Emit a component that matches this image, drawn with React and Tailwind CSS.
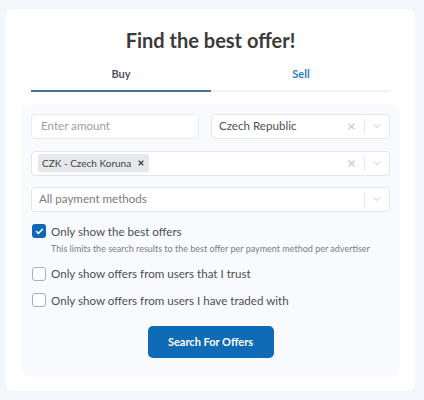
import React, { useState } from 'react';
import { X, ChevronDown, Check } from 'lucide-react';

const font = { fontFamily: 'Lato, "Open Sans", sans-serif' };

const SelectBox = ({ children, clearable = true }) => (
  <div className="h-[25px] flex items-center bg-white border border-[#e3e6ea] rounded-[4px] pl-[7px]">
    <div className="flex-1 flex items-center min-w-0">{children}</div>
    {clearable && <X className="w-[11px] h-[11px] text-[#c4c7cb] mr-[7px]" strokeWidth={2.5} />}
    <div className="w-px h-[15px] bg-[#e3e6ea]" />
    <ChevronDown className="w-[12px] h-[12px] text-[#b8bcc1] mx-[6px]" strokeWidth={1.8} />
  </div>
);

const CheckRow = ({ checked, label, children }) => (
  <div>
    <div className="flex items-center gap-[5px]">
      <div
        className={`w-[14px] h-[14px] rounded-[3px] flex items-center justify-center ${
          checked ? 'bg-[#0f68b3]' : 'bg-white border border-[#a9b0b8]'
        }`}
      >
        {checked && <Check className="w-[9px] h-[9px] text-white" strokeWidth={4} />}
      </div>
      <span className="text-[11.6px] text-[#4b4f55]">{label}</span>
    </div>
    {children}
  </div>
);

export default function App() {
  const [tab] = useState('buy');
  return (
    <div className="w-[424px] h-[400px] bg-[#f3f6fa] pt-[9px] pl-[6px]" style={font}>
      <div className="w-[409px] h-[382px] bg-white rounded-[7px] flex flex-col items-center">
        <h1 className="text-[20px] font-bold text-[#3b3b3b] mt-[21px] leading-none">Find the best offer!</h1>
        <div className="w-[360px] flex mt-[16px] ml-[1px]">
          <div className={`flex-1 text-center text-[11px] font-bold pb-[7px] border-b-2 ${tab === 'buy' ? 'border-[#4a7099] text-[#4b5563]' : ''}`}>
            Buy
          </div>
          <div className="flex-1 text-center text-[11px] font-bold pb-[7px] border-b-2 border-[#f1f3f5] text-[#2a80c4]">
            Sell
          </div>
        </div>
        <div className="w-[379px] h-[273px] mt-[12px] bg-[#f8fafd] rounded-[10px] px-[10px] pt-[10px]">
          <div className="flex gap-[12px]">
            <div className="w-[168px] h-[25px] bg-white border border-[#e9ecef] rounded-[4px] flex items-center pl-[9px] text-[11.6px] text-[#9aa0a6]">
              Enter amount
            </div>
            <div className="flex-1">
              <SelectBox>
                <span className="text-[11.6px] text-[#4b4f55]">Czech Republic</span>
              </SelectBox>
            </div>
          </div>
          <div className="mt-[12px]">
            <SelectBox>
              <span className="h-[18px] bg-[#e6e8ea] rounded-[2px] text-[10px] text-[#3f4348] flex items-center px-[4px] -ml-[1px]">
                CZK - Czech Koruna
                <X className="w-[8px] h-[8px] ml-[6px] text-[#3f4348]" strokeWidth={3.5} />
              </span>
            </SelectBox>
          </div>
          <div className="mt-[11px]">
            <SelectBox clearable={false}>
              <span className="text-[11.6px] text-[#777c82]">All payment methods</span>
            </SelectBox>
          </div>
          <div className="mt-[11px] pl-[1px] flex flex-col">
            <CheckRow checked label="Only show the best offers">
              <div className="text-[9px] text-[#7a7f85] ml-[19px] mt-[2px]">
                This limits the search results to the best offer per payment method per advertiser
              </div>
            </CheckRow>
            <div className="mt-[10px]">
              <CheckRow label="Only show offers from users that I trust" />
            </div>
            <div className="mt-[9px]">
              <CheckRow label="Only show offers from users I have traded with" />
            </div>
          </div>
          <div className="flex justify-center mt-[17px]">
            <button className="w-[126px] h-[32px] bg-[#0f6bb6] rounded-[5px] text-white text-[11px] font-bold">
              Search For Offers
            </button>
          </div>
        </div>
      </div>
    </div>
  );
}
